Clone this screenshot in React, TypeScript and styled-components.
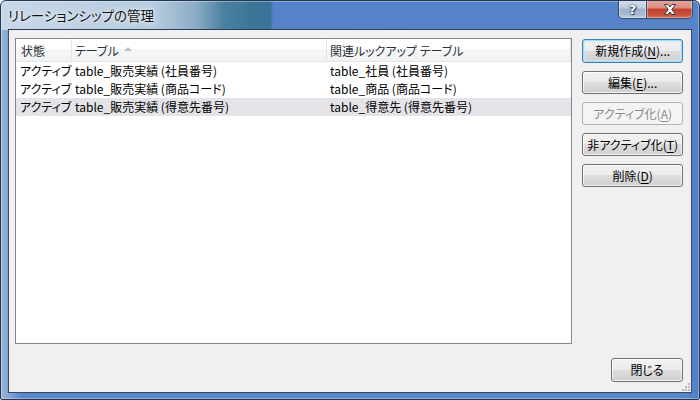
import React from 'react';
import styled, { createGlobalStyle } from 'styled-components';

const GlobalStyle = createGlobalStyle`
  html, body {
    margin: 0;
    padding: 0;
    background: #ffffff;
  }
  body {
    font-family: "Noto Sans CJK JP", "Noto Sans", sans-serif;
    font-feature-settings: "palt";
  }
  button {
    font-feature-settings: "palt";
  }
`;

const FONT = `"Noto Sans CJK JP", "Noto Sans", sans-serif`;

const Window = styled.div`
  width: 700px;
  height: 400px;
  box-sizing: border-box;
  display: flex;
  flex-direction: column;
  padding: 0 7px 6px 7px;
  border: 1px solid #253650;
  border-radius: 6px 6px 2px 2px;
  background:
    linear-gradient(90deg, #c6d7e8 0%, #b7cce0 22%, #8aabc6 28%, #4a809f 32%, #3b7598 36%, #3a7397 38.6%, #5583c8 39%, #5684c9 100%) 0 0 / 100% 29px no-repeat,
    linear-gradient(90deg, #9ab6d6 0%, #5a87c7 3%, #5a87c7 97%, #5080c4 100%);
  box-shadow: inset 0 0 0 1px rgba(255, 255, 255, 0.35);
  overflow: hidden;
`;

const TitleBar = styled.div`
  height: 28px;
  flex: none;
  display: flex;
  align-items: flex-start;
  justify-content: space-between;
  margin-right: -1px;
`;

const Title = styled.div`
  font-family: ${FONT};
  font-size: 13.5px;
  line-height: 16px;
  padding-top: 6px;
  color: #111;
  text-shadow: 0 0 6px rgba(255, 255, 255, 0.9), 0 0 2px rgba(255, 255, 255, 0.9);
`;

const Controls = styled.div`
  display: flex;
  height: 19px;
  margin-top: -1px;
`;

const CaptionButton = styled.div<{ $close?: boolean }>`
  width: ${p => (p.$close ? '46px' : '29px')};
  height: 19px;
  box-sizing: border-box;
  display: flex;
  align-items: center;
  justify-content: center;
  border: 1px solid #3a4c68;
  border-top: none;
  border-left: ${p => (p.$close ? 'none' : '1px solid #3a4c68')};
  border-radius: ${p => (p.$close ? '0 0 5px 0' : '0 0 0 5px')};
  background: ${p =>
    p.$close
      ? 'linear-gradient(#e5a89c 0%, #d98a7b 45%, #c0412d 50%, #c9503a 80%, #d7735d 100%)'
      : 'linear-gradient(#d6e1ee 0%, #bccbdf 45%, #9fb2cb 50%, #a9bcd4 80%, #bfd0e4 100%)'};
  box-shadow: inset 0 0 0 1px rgba(255, 255, 255, 0.35);
  font-family: "DejaVu Sans", sans-serif;
  font-weight: bold;
  font-size: 13px;
  color: #ffffff;
  text-shadow: 0 0 1px #2a3850, 0 0 2px #2a3850, 1px 1px 1px #2a3850;
`;

const Client = styled.div`
  flex: 1;
  min-height: 0;
  display: flex;
  flex-direction: column;
  position: relative;
  background: #f0f0f0;
  border: 1px solid #34496d;
  border-top-color: #2c3d5a;
  padding: 8px 8px 10px 6px;
`;

const Main = styled.div`
  display: flex;
  height: 306px;
`;

const ListView = styled.div`
  width: 559px;
  height: 306px;
  box-sizing: border-box;
  border: 1px solid #828790;
  background: #ffffff;
  display: flex;
  flex-direction: column;
`;

const HeaderRow = styled.div`
  display: flex;
  height: 23px;
  flex: none;
  background: linear-gradient(#ffffff 0%, #ffffff 45%, #f5f6f8 46%, #f1f2f4 100%);
  border-bottom: 1px solid #e4e6ea;
  box-sizing: border-box;
`;

const HeaderCell = styled.div<{ $w: number; $pad?: number }>`
  width: ${p => p.$w}px;
  flex: none;
  box-sizing: border-box;
  display: flex;
  align-items: center;
  gap: 5px;
  padding-left: ${p => p.$pad ?? 4}px;
  border-right: 1px solid #e3e5e8;
  font-family: ${FONT};
  font-size: 12px;
  color: #2c323a;
  white-space: nowrap;
`;

const SortArrow = styled.span`
  width: 0;
  height: 0;
  border-left: 4px solid transparent;
  border-right: 4px solid transparent;
  border-bottom: 4px solid #b9bec6;
  margin-top: -2px;
`;

const Row = styled.div<{ $selected?: boolean }>`
  display: flex;
  height: 18px;
  flex: none;
  width: 555px;
  background: ${p => (p.$selected ? '#e3e3e8' : 'transparent')};
`;

const Cell = styled.div<{ $w: number; $pad?: number }>`
  width: ${p => p.$w}px;
  flex: none;
  box-sizing: border-box;
  padding-left: ${p => p.$pad ?? 4}px;
  font-family: ${FONT};
  font-size: 12px;
  line-height: 18px;
  color: #000;
  white-space: nowrap;
  overflow: hidden;
`;

const SideButtons = styled.div`
  margin-left: 10px;
  padding-top: 1px;
  width: 101px;
  display: flex;
  flex-direction: column;
  gap: 8px;
`;

const Button = styled.button<{ $default?: boolean; $w?: number; $h?: number }>`
  width: ${p => (p.$w ? `${p.$w}px` : '100%')};
  height: ${p => p.$h ?? 23}px;
  box-sizing: border-box;
  padding: 0;
  border: 1px solid ${p => (p.$default ? '#3c7fb1' : '#707070')};
  border-radius: 3px;
  background: linear-gradient(#f2f2f2 0%, #ebebeb 48%, #dddddd 50%, #cfcfcf 100%);
  box-shadow: ${p =>
    p.$default
      ? 'inset 0 0 0 1px #a6dcf5, inset 0 0 0 2px rgba(200, 235, 250, 0.6)'
      : 'inset 0 0 0 1px rgba(255, 255, 255, 0.75)'};
  font-family: ${FONT};
  font-size: 12px;
  line-height: 16px;
  color: #000;
  cursor: default;

  u {
    text-underline-offset: 2px;
  }

  &:disabled {
    border-color: #adb2b5;
    background: #f4f4f4;
    box-shadow: none;
    color: #8a8a8a;
  }
`;

const Footer = styled.div`
  display: flex;
  justify-content: flex-end;
  margin-top: 14px;
`;

const Grip = styled.svg`
  position: absolute;
  right: 1px;
  bottom: 1px;
`;

const COLS = [56, 255, 244];

const rows = [
  ['アクティブ', 'table_販売実績 (社員番号)', 'table_社員 (社員番号)'],
  ['アクティブ', 'table_販売実績 (商品コード)', 'table_商品 (商品コード)'],
  ['アクティブ', 'table_販売実績 (得意先番号)', 'table_得意先 (得意先番号)'],
];

const App: React.FC = () => {
  return (
    <>
      <GlobalStyle />
      <Window>
        <TitleBar>
          <Title>リレーションシップの管理</Title>
          <Controls>
            <CaptionButton>?</CaptionButton>
            <CaptionButton $close>
              <svg width="14" height="11" viewBox="0 0 14 11">
                <path
                  d="M1.5 0.5 H5 L7 3 L9 0.5 H12.5 L8.8 5.5 L12.5 10.5 H9 L7 8 L5 10.5 H1.5 L5.2 5.5 Z"
                  fill="#ffffff"
                  stroke="#3b3f49"
                  strokeWidth="1"
                  strokeLinejoin="round"
                />
              </svg>
            </CaptionButton>
          </Controls>
        </TitleBar>
        <Client>
          <Main>
            <ListView>
              <HeaderRow>
                <HeaderCell $w={COLS[0]} $pad={5}>状態</HeaderCell>
                <HeaderCell $w={COLS[1]} $pad={3}>
                  テーブル
                  <SortArrow />
                </HeaderCell>
                <HeaderCell $w={COLS[2]} $pad={3}>関連ルックアップ テーブル</HeaderCell>
              </HeaderRow>
              {rows.map((r, i) => (
                <Row key={i} $selected={i === 2}>
                  <Cell $w={COLS[0]} $pad={4}>{r[0]}</Cell>
                  <Cell $w={COLS[1]} $pad={3}>{r[1]}</Cell>
                  <Cell $w={COLS[2]} $pad={3}>{r[2]}</Cell>
                </Row>
              ))}
            </ListView>
            <SideButtons>
              <Button $default $h={24}>
                新規作成(<u>N</u>)...
              </Button>
              <Button>
                編集(<u>E</u>)...
              </Button>
              <Button disabled>
                アクティブ化(<u>A</u>)
              </Button>
              <Button>
                非アクティブ化(<u>T</u>)
              </Button>
              <Button>
                削除(<u>D</u>)
              </Button>
            </SideButtons>
          </Main>
          <Footer>
            <Button $w={72} $h={24}>閉じる</Button>
          </Footer>
          <Grip width="8" height="8" viewBox="0 0 8 8">
            <g fill="#b8bcc2">
              <rect x="6" y="0" width="2" height="2" />
              <rect x="3" y="3" width="2" height="2" />
              <rect x="6" y="3" width="2" height="2" />
              <rect x="0" y="6" width="2" height="2" />
              <rect x="3" y="6" width="2" height="2" />
              <rect x="6" y="6" width="2" height="2" />
            </g>
          </Grip>
        </Client>
      </Window>
    </>
  );
};

export default App;
